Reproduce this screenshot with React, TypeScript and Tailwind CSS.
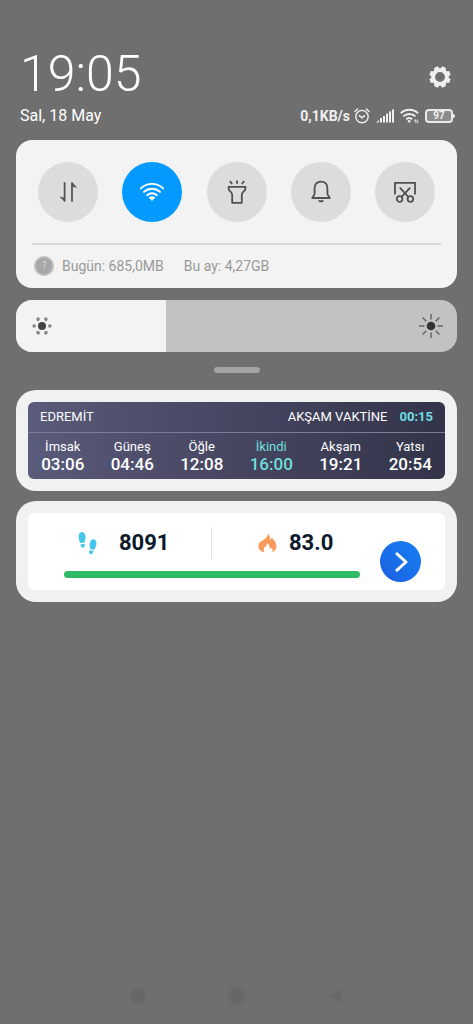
import { useState } from "react";
import type { ReactNode } from "react";

const TEETH = [22.5, 67.5, 112.5, 157.5, 202.5, 247.5, 292.5, 337.5];
const RAYS = [0, 45, 90, 135, 180, 225, 270, 315];
const DOTS = [30, 90, 150, 210, 270, 330];

function GearIcon() {
  return (
    <svg width="22" height="22" viewBox="0 0 22 22" aria-hidden="true">
      <circle cx="11" cy="11" r="6.8" fill="none" stroke="#f0f0f0" strokeWidth="3.8" />
      {TEETH.map((a) => (
        <path key={a} d="M8.2 3.4 8.900 .3h4.200l.7 3.100z" fill="#f0f0f0" transform={`rotate(${a} 11 11)`} />
      ))}
    </svg>
  );
}

function AlarmIcon() {
  return (
    <svg width="16" height="16" viewBox="0 0 16 16" fill="none" stroke="#f0f0f0" strokeWidth="1.4" strokeLinecap="round" aria-hidden="true">
      <circle cx="8" cy="8.6" r="6.2" />
      <path d="M5.4 7.6 8 9.8l2.6-2.2M.9 3.6 3.6 1M15.1 3.6 12.4 1" />
    </svg>
  );
}

function SignalIcon() {
  return (
    <svg width="18" height="14" viewBox="0 0 18 14" fill="#f0f0f0" aria-hidden="true">
      <path d="M0 13.5 3 11v2.5z" />
      <rect x="4" y="9" width="2" height="4.5" />
      <rect x="7" y="7" width="2" height="6.5" />
      <rect x="10" y="4.6" width="2" height="8.9" />
      <rect x="13" y="2.4" width="2" height="11.1" />
      <rect x="16" y="0.4" width="2" height="13.1" />
    </svg>
  );
}

function StatusWifiIcon() {
  return (
    <svg width="19" height="16" viewBox="0 0 19 16" fill="none" stroke="#f0f0f0" strokeWidth="2" aria-hidden="true">
      <path d="M.8 5.2a12.4 12.4 0 0 1 17.2 0M3.4 8.4a8.600 8.600 0 0 1 12 0M6.200 11.300a4.600 4.600 0 0 1 6 0" />
      <path d="m7.400 12.900 1.800 2 1.800-2a2.600 2.600 0 0 0-3.600 0z" fill="#f0f0f0" stroke="none" />
      <path d="m14.200 13 1.100-1.500 1.100 1.500M16.200 13.600l1.100 1.500 1.100-1.500M15.300 11.800v3.400M17.300 11.500v3.400" strokeWidth=".7" />
    </svg>
  );
}

function Battery({ level }: { level: number }) {
  return (
    <div className="flex items-center" aria-label={`${level}%`}>
      <div className="flex h-[14px] w-7 items-center justify-center rounded border-2 border-[#e8e8e8] bg-[#8c8c8c] text-[10px] leading-none font-bold">
        {level}
      </div>
      <div className="h-1 w-0.5 rounded-r bg-[#f0f0f0]" />
    </div>
  );
}

function DataIcon() {
  return (
    <svg width="26" height="26" viewBox="0 0 26 26" fill="none" stroke="#505050" strokeWidth="1.7" aria-hidden="true">
      <path d="M9.6 3.2v19M17 22.800V3.800" />
      <path d="M9.800 22.600 5.200 18l4.600 1.200zM17 3.400l4.600 5L17 7.200z" fill="#505050" strokeWidth=".6" />
    </svg>
  );
}

function WifiIcon() {
  return (
    <svg width="26" height="26" viewBox="0 0 26 26" fill="none" stroke="#fff" strokeWidth="1.9" strokeLinecap="round" aria-hidden="true">
      <path d="M1.9 9.4a16 16 0 0 1 22.2 0M5 12.9a11.6 11.6 0 0 1 16 0M8.2 16.200a7 7 0 0 1 9.600 0" />
      <path d="m9.800 18.600 3.200 3.300 3.200-3.300a4.500 4.500 0 0 0-6.400 0z" fill="#fff" stroke="none" />
    </svg>
  );
}

function TorchIcon() {
  return (
    <svg width="26" height="26" viewBox="0 0 26 26" fill="none" stroke="#505050" strokeWidth="1.8" strokeLinejoin="round" aria-hidden="true">
      <path d="M4.600 7.800h16.800v1.600c0 3-3.600 3.600-3.600 6.400v8H8.200v-8c0-2.800-3.600-3.400-3.600-6.400z" />
      <path d="M13 1.400v3.400M5.800 2.200l2.400 2.800M20.200 2.200l-2.400 2.800" />
    </svg>
  );
}

function BellIcon() {
  return (
    <svg width="26" height="26" viewBox="0 0 26 26" fill="none" stroke="#505050" strokeWidth="1.8" strokeLinejoin="round" aria-hidden="true">
      <path d="M13 2.600c-4 0-6.400 2.700-6.400 6.600v5.200c0 1.800-1.600 2.800-2.400 4.600h17.600c-.8-1.800-2.400-2.800-2.400-4.600V9.200c0-3.900-2.400-6.600-6.400-6.600z" />
      <path d="M10 21.200h6c-.6 1.700-1.700 2-3 2s-2.400-.3-3-2z" fill="#505050" stroke="none" />
    </svg>
  );
}

function ScreenshotIcon() {
  return (
    <svg width="26" height="26" viewBox="0 0 26 26" fill="none" stroke="#505050" strokeWidth="1.800" aria-hidden="true">
      <path d="M3 15.400V3.800h20v11.600" />
      <path d="m7.800 8.600 8.800 9.600M18.200 8.600l-8.800 9.600" />
      <circle cx="7.600" cy="20" r="2.800" />
      <circle cx="18.400" cy="20" r="2.800" />
    </svg>
  );
}

function DimIcon() {
  return (
    <svg width="20" height="20" viewBox="0 0 20 20" aria-hidden="true">
      <circle cx="10" cy="10" r="4" fill="#444" />
      {DOTS.map((a) => (
        <circle key={a} cx="10" cy="2.200" r="1.800" fill="#868686" transform={`rotate(${a} 10 10)`} />
      ))}
    </svg>
  );
}

function BrightIcon() {
  return (
    <svg width="26" height="26" viewBox="0 0 26 26" aria-hidden="true">
      <circle cx="13" cy="13" r="4.300" fill="#333" />
      {RAYS.map((a) => (
        <path key={a} d="M13 1v5.400" stroke="#666" strokeWidth="1.500" transform={`rotate(${a} 13 13)`} />
      ))}
    </svg>
  );
}

function StepsIcon() {
  return (
    <svg width="19" height="24" viewBox="0 0 19 24" fill="#45c6ea" aria-hidden="true">
      <path d="M3.800 1C6.200.8 7.600 3 7.500 6c0 2.200-.6 3.600-.8 5.400l-4.600.6C1.600 9.800.600 8.200.600 5.800.600 3 1.800 1.200 3.800 1z" />
      <path d="m2.600 13.300 4-.5c.6 2-.2 3.700-1.600 3.900s-2.300-1.200-2.400-3.400z" />
      <path d="M15.600 8.200c2.300.4 3.200 2.600 2.800 5.400-.4 2.300-1.500 3.600-2.100 5.400l-4.300-1.200c0-1.800-.6-3.200-.2-5.400.5-2.800 1.900-4.500 3.800-4.200z" />
      <path d="m11.600 19.100 3.900 1c-.3 2.200-1.700 3.500-3.100 3.100-1.300-.4-1.600-2-.8-4.100z" />
    </svg>
  );
}

function FlameIcon() {
  return (
    <svg width="19" height="20" viewBox="0 0 19 20" fill="#f79a5b" aria-hidden="true">
      <path d="M10 .6c1.600 1.600 2.200 3.600 1.800 5.800 1 .2 1.600-.6 1.800-1.800 2.600 2.400 4.800 5.600 4.900 8.800 0 2.600-1.800 4.800-4.400 5.800.8-2 .6-3.400-.6-4.600-.4 1-1 1.400-1.800 1.400.4-2.400-.4-4.400-2.300-6-.2 3-3.800 4.200-3.700 6.800 0 .9.200 1.700.6 2.400C3 18.600.500 16.400.500 13.200c0-4.600 3.600-4.800 6.300-7.200C8.600 4.500 9.800 3 10 .6z" />
    </svg>
  );
}

function NavButton({ label, children }: { label: string; children: ReactNode }) {
  return (
    <button aria-label={label} className="flex size-6 items-center justify-center">
      {children}
    </button>
  );
}

const PRAYERS = [
  { name: "İmsak", time: "03:06" },
  { name: "Güneş", time: "04:46" },
  { name: "Öğle", time: "12:08" },
  { name: "İkindi", time: "16:00" },
  { name: "Akşam", time: "19:21" },
  { name: "Yatsı", time: "20:54" },
];

const TILES = [
  { id: "data", label: "Mobil veri", icon: <DataIcon /> },
  { id: "wifi", label: "Wi-Fi", icon: <WifiIcon /> },
  { id: "torch", label: "El feneri", icon: <TorchIcon /> },
  { id: "mute", label: "Sessiz", icon: <BellIcon /> },
  { id: "shot", label: "Ekran görüntüsü", icon: <ScreenshotIcon /> },
];

export default function App() {
  const [active, setActive] = useState("wifi");
  const [brightness, setBrightness] = useState(34);

  return (
    <div className="flex min-h-screen flex-col bg-[#6f6f6f] px-4 font-['Roboto',sans-serif] text-white">
      <header className="pt-11 pr-0.5 pl-1">
        <div className="flex items-center justify-between">
          <h1 className="text-[50px] leading-[60px] font-light">19:05</h1>
          <button aria-label="Ayarlar" className="mt-1.5 mr-1">
            <GearIcon />
          </button>
        </div>
        <div className="flex h-6 items-center justify-between">
          <p className="text-base">Sal, 18 May</p>
          <div className="flex items-center gap-1.5 text-[#f0f0f0]">
            <div className="flex items-center gap-1">
              <span className="text-sm font-bold">0,1KB/s</span>
              <AlarmIcon />
            </div>
            <SignalIcon />
            <StatusWifiIcon />
            <Battery level={97} />
          </div>
        </div>
      </header>

      <section className="mt-3 rounded-2xl bg-[#f3f3f3] px-4 pt-[22px] pb-2.5">
        <div className="flex justify-between px-1.5">
          {TILES.map((tile) => (
            <button
              key={tile.id}
              aria-label={tile.label}
              aria-pressed={active === tile.id}
              onClick={() => setActive(tile.id)}
              className={`flex size-[60px] items-center justify-center rounded-full ${
                active === tile.id ? "bg-[#0499ff]" : "bg-[#dcdcdc]"
              }`}
            >
              {tile.icon}
            </button>
          ))}
        </div>
        <div className="mt-[21px] flex items-center border-t-2 border-[#d8d8d8] pt-[9px] text-sm leading-6 text-[#999]">
          <span className="mr-2 ml-0.5 flex size-5 items-center justify-center rounded-full border-2 border-[#bdbdbd] bg-[#a6a6a6] text-[10px] leading-none text-[#d5d5d5]">
            ?
          </span>
          <span>Bugün: 685,0MB</span>
          <span className="ml-5">Bu ay: 4,27GB</span>
        </div>
      </section>

      <div className="relative mt-3 h-[52px] overflow-hidden rounded-2xl bg-[#c2c2c2]">
        <div className="h-full bg-[#f3f3f3]" style={{ width: `${brightness}%` }} />
        <input
          type="range"
          aria-label="Parlaklık"
          value={brightness}
          onChange={(e) => setBrightness(Number(e.target.value))}
          className="absolute inset-0 w-full cursor-pointer appearance-none opacity-0"
        />
        <div className="pointer-events-none absolute inset-0 flex items-center justify-between pr-[13px] pl-4">
          <DimIcon />
          <BrightIcon />
        </div>
      </div>

      <div className="mt-[15px] h-1.5 w-[46px] self-center rounded-full bg-[#a3a3a3]" />

      <section className="mt-[17px] rounded-[20px] bg-[#f1f1f1] p-3">
        <div className="overflow-hidden rounded-md bg-linear-to-r from-[#5a5a7a] to-[#333349]">
          <div className="flex h-[31px] items-center border-b border-[#7c7c95] px-3 text-[13px]">
            <span className="flex-1">EDREMİT</span>
            <span>AKŞAM VAKTİNE</span>
            <span className="ml-3 font-bold text-[#6fdfe2]">00:15</span>
          </div>
          <ul className="grid grid-cols-6 pt-1.5 pb-1.5 text-center">
            {PRAYERS.map((p) => (
              <li key={p.name} className={p.name === "İkindi" ? "text-[#6fdfd8]" : ""}>
                <div className="text-[13px] leading-4">{p.name}</div>
                <div className="text-[17px] leading-[18px] font-medium">{p.time}</div>
              </li>
            ))}
          </ul>
        </div>
      </section>

      <section className="mt-2.5 rounded-[20px] bg-[#f1f1f1] p-3">
        <div className="flex items-end rounded-md bg-white pt-3.5 pr-6 pb-2 pl-9">
          <div className="flex-1 pb-1">
            <div className="grid h-8 grid-cols-2 divide-x divide-[#e2e2e2] text-[22px] leading-8 font-bold text-[#0b1a2b]">
              <div className="flex items-center gap-[22px] pl-3.5">
                <StepsIcon />
                8091
              </div>
              <div className="flex items-center gap-3 pl-[46px]">
                <FlameIcon />
                83.0
              </div>
            </div>
            <div className="mt-3 h-[7px] rounded-full bg-[#2fbb66]" />
          </div>
          <button
            aria-label="Aç"
            className="ml-5 flex size-[41px] items-center justify-center rounded-full bg-linear-to-tr from-[#1b5fe0] to-[#1780f5]"
          >
            <svg width="14" height="20" viewBox="0 0 14 20" fill="none" stroke="#fff" strokeWidth="3" strokeLinecap="round" strokeLinejoin="round" aria-hidden="true">
              <path d="m3 1.800 9 8.200-9 8.200" />
            </svg>
          </button>
        </div>
      </section>

      <nav className="mt-auto flex justify-center gap-[75px] pb-4">
        <NavButton label="Son uygulamalar">
          <span className="size-3.5 rounded-sm bg-[#676767] blur-[1px]" />
        </NavButton>
        <NavButton label="Ana ekran">
          <span className="size-4 rounded-full bg-[#666] blur-[2px]" />
        </NavButton>
        <NavButton label="Geri">
          <svg width="12" height="14" viewBox="0 0 12 14" className="blur-[1px]" aria-hidden="true">
            <path d="M0 7 11 1v12z" fill="#666" />
          </svg>
        </NavButton>
      </nav>
    </div>
  );
}
